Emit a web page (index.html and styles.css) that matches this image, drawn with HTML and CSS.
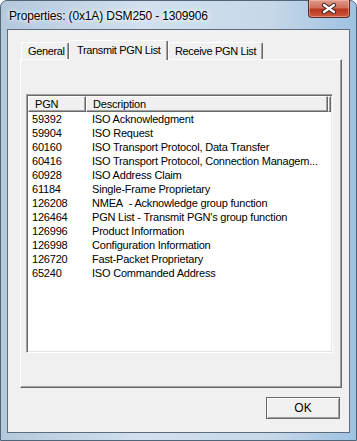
FILE: index.html
```html
<!DOCTYPE html>
<html lang="en">
  <head>
    <meta charset="UTF-8" />
    <title>Properties: (0x1A) DSM250 - 1309906</title>
    <link rel="stylesheet" href="styles.css">
  </head>
  <body>
    <div class="window">
      <div class="titlebar">
        <span class="title">Properties: (0x1A) DSM250 - 1309906</span>
        <div class="close">
          <svg width="16" height="11" viewBox="0 0 16 11">
            <path d="M3 2 L13 9 M13 2 L3 9" stroke="#3a2420" stroke-width="4.2" stroke-linecap="round" fill="none" />
            <path d="M3 2 L13 9 M13 2 L3 9" stroke="#ffffff" stroke-width="2.2" stroke-linecap="round" fill="none" />
          </svg>
        </div>
      </div>

      <div class="client">
        <div class="tabs">
          <div class="tab tab-general">General</div>
          <div class="tab tab-transmit active">Transmit PGN List</div>
          <div class="tab tab-receive">Receive PGN List</div>
        </div>

        <div class="panel">
          <div class="list">
            <div class="list-header">
              <div class="hcol pgn">PGN</div>
              <div class="hcol desc">Description</div>
              <div class="hcol rest"></div>
            </div>
            <div class="rows">
              <div class="row"><span class="pgn">59392</span><span class="desc">ISO Acknowledgment</span></div>
              <div class="row"><span class="pgn">59904</span><span class="desc">ISO Request</span></div>
              <div class="row"><span class="pgn">60160</span><span class="desc">ISO Transport Protocol, Data Transfer</span></div>
              <div class="row"><span class="pgn">60416</span><span class="desc">ISO Transport Protocol, Connection Managem...</span></div>
              <div class="row"><span class="pgn">60928</span><span class="desc">ISO Address Claim</span></div>
              <div class="row"><span class="pgn">61184</span><span class="desc">Single-Frame Proprietary</span></div>
              <div class="row"><span class="pgn">126208</span><span class="desc">NMEA&nbsp; - Acknowledge group function</span></div>
              <div class="row"><span class="pgn">126464</span><span class="desc">PGN List - Transmit PGN's group function</span></div>
              <div class="row"><span class="pgn">126996</span><span class="desc">Product Information</span></div>
              <div class="row"><span class="pgn">126998</span><span class="desc">Configuration Information</span></div>
              <div class="row"><span class="pgn">126720</span><span class="desc">Fast-Packet Proprietary</span></div>
              <div class="row"><span class="pgn">65240</span><span class="desc">ISO Commanded Address</span></div>
            </div>
          </div>
        </div>

        <div class="buttons">
          <button class="ok">OK</button>
        </div>
      </div>
    </div>
  </body>
</html>
```

FILE: styles.css
```css
/* basic reset */
* {
  box-sizing: border-box;
  margin: 0;
  padding: 0;
}

body {
  width: 357px;
  height: 441px;
  overflow: hidden;
  background: #ffffff;
  font-family: "Liberation Sans", Arial, sans-serif;
}

/* window frame */
.window {
  width: 357px;
  height: 441px;
  display: flex;
  flex-direction: column;
  padding: 0 6px 7px 6px;
  border: 1px solid #50647a;
  border-radius: 7px 7px 0 0;
  background: linear-gradient(to right, #b4c8dc 0, #d2e0ee 40%, #c8d8e8 75%, #9ec2e2 100%);
}

.titlebar {
  height: 28px;
  display: flex;
  justify-content: space-between;
  align-items: flex-start;
}

.title {
  padding: 8px 0 0 2px;
  font-size: 12px;
  line-height: 15px;
  letter-spacing: -0.15px;
  color: #000;
  text-shadow: 0 0 6px #ffffff, 0 0 3px #ffffff;
}

.close {
  width: 42px;
  height: 18px;
  margin-top: -1px;
  display: flex;
  justify-content: center;
  align-items: center;
  border: 1px solid #5b2a25;
  border-top: none;
  border-radius: 0 0 4px 4px;
  background: linear-gradient(to bottom, #e09a8c 0, #d0705e 45%, #b8361f 55%, #cc5a3e 100%);
  box-shadow: inset 0 0 0 1px rgba(255, 200, 190, 0.45);
}

/* client area */
.client {
  height: 404px;
  display: flex;
  flex-direction: column;
  padding: 10px 8px 0 12px;
  background: #f0f0f0;
  border: 1px solid #5d6c7d;
}

.tabs {
  display: flex;
  align-items: flex-end;
  height: 19px;
  margin-left: 1px;
  font-size: 11px;
  letter-spacing: -0.35px;
}

.tab {
  height: 17px;
  padding: 2px 0 0 6px;
  background: #f0f0f0;
  color: #000;
  border-left: 1px solid #ffffff;
  border-top: 1px solid #ffffff;
  border-right: 1px solid #696969;
  box-shadow: inset -1px 0 0 #a0a0a0;
  border-radius: 2px 2px 0 0;
  white-space: nowrap;
  overflow: hidden;
}

.tab-general { width: 48px; }
.tab-transmit { width: 99px; }
.tab-receive { width: 95px; }

.tab.active {
  position: relative;
  z-index: 1;
  height: 20px;
  margin-bottom: -1px;
  padding: 3px 0 0 7px;
}

.panel {
  width: 322px;
  height: 329px;
  padding: 34px 0 0 5px;
  background: #f0f0f0;
  border-top: 1px solid #ffffff;
  border-left: 1px solid #ffffff;
  border-right: 1px solid #696969;
  border-bottom: 1px solid #696969;
  box-shadow: inset -1px -1px 0 #a0a0a0;
}

/* list view */
.list {
  width: 307px;
  height: 259px;
  background: #ffffff;
  border-top: 1px solid #a0a0a0;
  border-left: 1px solid #a0a0a0;
  border-right: 1px solid #ffffff;
  border-bottom: 1px solid #ffffff;
  box-shadow: inset 1px 1px 0 #696969, inset -1px -1px 0 #e3e3e3;
  padding: 1px;
  font-size: 11px;
  letter-spacing: -0.2px;
}

.list-header {
  display: flex;
  height: 16px;
}

.hcol {
  height: 16px;
  padding: 1px 0 0 6px;
  line-height: 13px;
  background: #f0f0f0;
  border-top: 1px solid #ffffff;
  border-left: 1px solid #ffffff;
  border-right: 1px solid #696969;
  border-bottom: 1px solid #696969;
  box-shadow: inset -1px -1px 0 #a0a0a0;
}

.hcol.pgn { width: 58px; }
.hcol.desc { width: 242px; }
.hcol.rest { flex: 1; padding: 0; }

.row {
  display: flex;
  height: 14px;
  line-height: 14px;
  color: #000;
  white-space: nowrap;
}

.row .pgn {
  width: 58px;
  padding-left: 4px;
}

.row .desc {
  padding-left: 6px;
}

/* buttons */
.buttons {
  display: flex;
  justify-content: flex-end;
  margin-top: 9px;
  padding-right: 1px;
}

.ok {
  width: 74px;
  height: 22px;
  font-family: "Liberation Sans", Arial, sans-serif;
  font-size: 12px;
  color: #000;
  background: #f0f0f0;
  border: 1px solid #696969;
  box-shadow: inset 1px 1px 0 #ffffff, inset -1px -1px 0 #a0a0a0;
}
```
